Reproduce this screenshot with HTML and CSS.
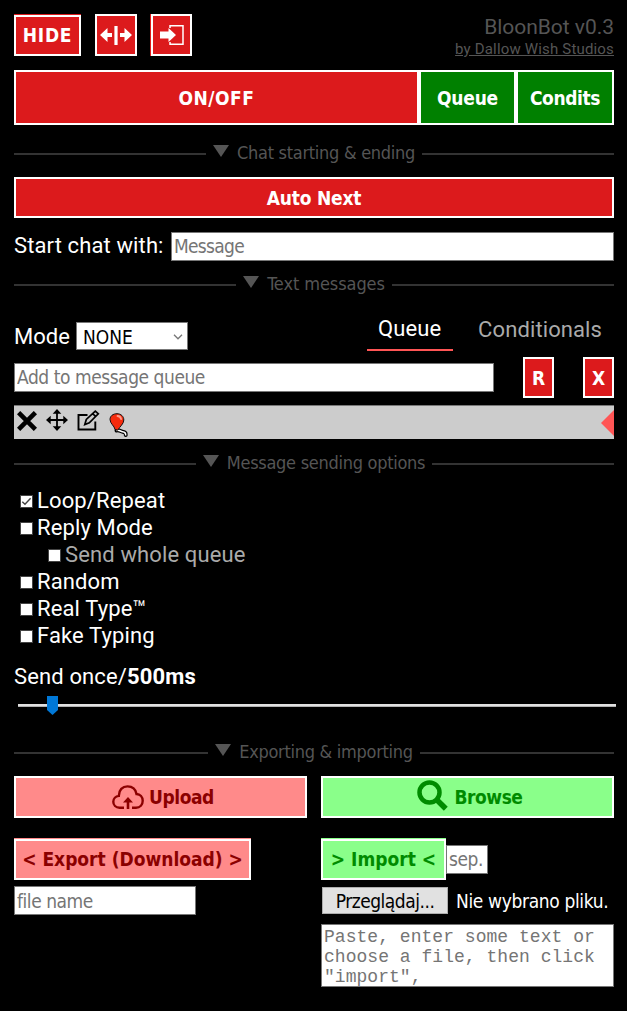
FILE: index.html
```html
<!DOCTYPE html>
<html lang="en">
<head>
<meta charset="utf-8">
<title>BloonBot</title>
<link rel="stylesheet" href="styles.css">
</head>
<body>
<main class="panel">
  <header class="top">
    <button class="btn hide"><span>HIDE</span></button>
    <button class="btn icon-btn"><svg width="32" height="20" viewBox="0 0 32 20"><path fill="#fff" d="M0 10L7.500 3v5H12v4H7.500v5zM32 10L24.500 3v5H20v4h4.500v5zM14.400 1h3.200v19h-3.200z"/></svg></button>
    <button class="btn icon-btn dock"><svg width="24" height="20" viewBox="0 0 24 20"><path fill="none" stroke="#fff" stroke-width="1.500" d="M10 3V.8h13v18.400H10V17"/><path fill="#fff" d="M0 6.500h8.500V3l7.500 7-7.500 7v-3.500H0z"/></svg></button>
    <div class="brand"><div class="name">BloonBot v0.3</div><a class="by">by Dallow Wish Studios</a></div>
  </header>
  <div class="main-row">
    <button class="btn onoff"><span>ON/OFF</span></button>
    <button class="btn green queue"><span>Queue</span></button>
    <button class="btn green condits"><span>Condits</span></button>
  </div>
  <div class="section s1"><i class="tri"></i><span>Chat starting &amp; ending</span></div>
  <button class="btn auto"><span>Auto Next</span></button>
  <div class="start"><label>Start chat with:</label><input class="field message" placeholder="Message"></div>
  <div class="section s2"><i class="tri"></i><span>Text messages</span></div>
  <div class="mode-row">
    <label class="mode">Mode</label>
    <div class="select"><span>NONE</span><svg width="10" height="6" viewBox="0 0 10 6"><path fill="none" stroke="#777" stroke-width="1.300" d="M1 .8l4 4 4-4"/></svg></div>
    <div class="tabs"><div class="tab active"><span class="tq">Queue</span></div><div class="tab"><span class="tc">Conditionals</span></div></div>
  </div>
  <div class="add-row">
    <input class="field add" placeholder="Add to message queue">
    <button class="btn small"><span>R</span></button>
    <button class="btn small"><span>X</span></button>
  </div>
  <div class="item">
    <svg class="ic-x" width="20" height="20" viewBox="0 0 20 20"><path stroke="#000" stroke-width="4.600" d="M1.600 1.600l16.800 16.800M18.400 1.600L1.600 18.400"/></svg>
    <svg class="ic-move" width="22" height="22" viewBox="0 0 22 22"><path stroke="#000" stroke-width="1.800" d="M11 2v18M2 11h18"/><path d="M11 0l4.300 4.700H6.700zM11 22l4.300-4.700H6.700zM0 11l4.700-4.300v8.600zM22 11l-4.700-4.300v8.600z"/></svg>
    <svg class="ic-edit" width="23" height="22" viewBox="0 0 23 22"><path fill="none" stroke="#000" stroke-width="1.900" d="M10.500 5H1.500v14.500h16.800v-8"/><path fill="none" stroke="#000" stroke-width="1.700" d="M7.800 14.500l1.500-5L18.300 1.200l3 2.600-9 9zM15.600 3.600l3 2.800"/></svg>
    <svg class="ic-balloon" width="20" height="25" viewBox="0 0 20 25"><path fill="none" stroke="#000" stroke-width="4" stroke-linecap="round" d="M7.500 17.500c3-.8 4 1 6 1.200s3.500.8 3.200 3.300"/><path fill="none" stroke="#fff" stroke-width="1.500" d="M7.500 17.500c3-.8 4 1 6 1.200s3.500.8 3.200 3.800"/><path fill="#f52b0d" stroke="#111" stroke-width="1" d="M8 .7c4 0 6.800 2.700 6.800 6.300 0 4-4 6.400-6 10.200l-2.800-.8C5.500 13 1 10.500 1 6.500 1 3 4 .7 8 .7z"/><path fill="none" stroke="#ff9b89" stroke-width="1.800" stroke-linecap="round" d="M8.500 3c2 .1 3.300 1.400 3.600 3.200"/></svg>
    <i class="marker"></i>
  </div>
  <div class="section s3"><i class="tri"></i><span>Message sending options</span></div>
  <div class="options">
    <label class="opt"><i class="box"><svg width="11" height="11" viewBox="0 0 11 11"><path fill="none" stroke="#444" stroke-width="1.400" d="M1.300 5.700L4 8.300l5.600-6"/></svg></i><span>Loop/Repeat</span></label>
    <label class="opt"><i class="box"></i><span>Reply Mode</span></label>
    <label class="opt sub"><i class="box"></i><span>Send whole queue</span></label>
    <label class="opt"><i class="box"></i><span>Random</span></label>
    <label class="opt"><i class="box"></i><span>Real Type™</span></label>
    <label class="opt"><i class="box"></i><span>Fake Typing</span></label>
  </div>
  <div class="rate">Send once/<b>500ms</b></div>
  <div class="slider"><svg class="thumb" width="11" height="19" viewBox="0 0 11 19"><path fill="#0078d7" d="M0 0h11v14l-5.500 5L0 14z"/></svg></div>
  <div class="section s4"><i class="tri"></i><span>Exporting &amp; importing</span></div>
  <div class="io">
    <div class="col">
      <button class="btn pink wide"><svg width="32" height="25" viewBox="0 0 32 25"><path fill="none" stroke="#8b0000" stroke-width="2.400" d="M12 22.700H7.500C3.800 22.700 1.300 20 1.300 16.800c0-3.300 2.400-5.600 5.500-5.900C6.800 5 10.500 1.400 15.500 1.400c4.800 0 8.200 3 9 7.600 3.700.2 6.200 3.200 6.200 6.700 0 4-2.700 7-6.700 7h-4"/><path fill="#8b0000" d="M16 12l5 5.500h-3.700V24h-2.600v-6.500H11z"/></svg><span class="up">Upload</span></button>
      <button class="btn pink export"><span>&lt; Export (Download) &gt;</span></button>
      <input class="field file-name" placeholder="file name">
    </div>
    <div class="col">
      <button class="btn lime wide"><svg class="lens" width="31" height="31" viewBox="0 0 31 31"><circle cx="12.500" cy="12.500" r="10" fill="none" stroke="#008b00" stroke-width="4.500"/><path stroke="#008b00" stroke-width="5.500" d="M18.500 18.500l10.300 10.300"/></svg><span class="br">Browse</span></button>
      <div class="import-row"><button class="btn lime import"><span>&gt; Import &lt;</span></button><input class="field sep" placeholder="sep."></div>
      <div class="file-row"><button class="native"><span>Przeglądaj...</span></button><span class="none">Nie wybrano pliku.</span></div>
      <div class="area">Paste, enter some text or choose a file, then click "import",</div>
    </div>
  </div>
</main>
</body>
</html>
```
FILE: styles.css
```css
* { box-sizing: border-box; }
body { margin: 0; background: #000; color: #fff; font-family: Roboto, sans-serif; font-size: 22px; }
svg { display: block; flex: none; }
.panel { width: 627px; height: 1011px; padding: 14px 13px 0 14px; display: flex; flex-direction: column; overflow: hidden; }
.btn, .field, .section, .select, .native, .none { font-family: "DejaVu Sans Condensed", "DejaVu Sans", sans-serif; font-stretch: condensed; font-size: 19px; }
.btn { display: flex; align-items: center; justify-content: center; margin: 0; padding: 0; border: 2px solid #fff; border-radius: 0; background: #dc1a1c; color: #fff; font-weight: bold; white-space: nowrap; flex: none; }
.btn.green { background: #008000; }
.btn.pink { background: #ff8a8a; color: #8b0000; }
.btn.lime { background: #8aff8a; color: #008b00; }
.top { display: flex; height: 42px; }
.top .hide { width: 67px; height: 41px; margin-top: 1px; box-shadow: 0 -1px #dc1a1c; letter-spacing: .7px; padding: 0 0 1px 0; }
.icon-btn { width: 42px; margin-left: 14px; }
.top .dock { width: 41px; margin-left: 14px; box-shadow: -1px 0 #dc1a1c; }
.brand { margin-left: auto; text-align: right; color: #555; }
.name { font-size: 21px; line-height: 26px; letter-spacing: -.03px; }
.by { display: block; font-size: 15px; line-height: 18px; letter-spacing: .17px; text-decoration: underline; }
.main-row { display: flex; height: 55px; margin-top: 14px; }
.onoff { width: 405px; letter-spacing: .5px; }
.queue { width: 97px; letter-spacing: -.2px; }
.condits { width: 98px; letter-spacing: -.4px; }
.section { display: flex; align-items: center; height: 24px; color: #555; font-size: 18px; letter-spacing: -.28px; white-space: nowrap; }
.section::before, .section::after { content: ""; flex: 1; height: 2px; background: #333; }
.section span { margin: -4px 7px 0 8px; }
.tri { margin: -6px 0 0 7px; border-left: 8px solid transparent; border-right: 8px solid transparent; border-top: 12px solid #555; }
.s1 { margin-top: 17px; }
.auto { height: 41px; margin-top: 11px; letter-spacing: -.2px; }
.start { display: flex; align-items: center; justify-content: space-between; height: 29px; margin-top: 14px; }
.start label { margin-top: -2px; letter-spacing: .12px; }
.field { height: 29px; padding: 0 2px 2px; border: 1px solid #777; border-radius: 0; background: #fff; color: #000; outline: 0; letter-spacing: -.45px; }
.field::placeholder { color: #757575; opacity: 1; }
.message { width: 443px; letter-spacing: -.7px; }
.s2 { margin-top: 12px; letter-spacing: -.08px; }
.mode-row { display: flex; height: 37px; margin-top: 17px; }
.mode { width: 62px; line-height: 46px; }
.select { display: flex; align-items: center; justify-content: space-between; width: 112px; height: 28px; margin-top: 8px; padding: 2px 4px 0 6px; border: 1px solid #777; background: #fff; color: #000; }
.tabs { display: flex; margin-left: auto; letter-spacing: .1px; }
.tab { height: 37px; line-height: 31px; padding: 0 12px 0 11px; color: #aaa; }
.tab.active { width: 86px; margin-right: 14px; line-height: 30px; color: #fff; border-bottom: 2px solid #ff5555; }
.add-row { display: flex; height: 41px; margin-top: 6px; }
.add { width: 480px; margin-top: 6px; }
.small { width: 31px; margin-left: 29px; }
.item { display: flex; height: 34px; margin-top: 7px; border-top: 1px solid #777; background: #ccc; }
.ic-x { margin: 5px 0 0 3px; }
.ic-move { margin: 3px 0 0 9px; }
.ic-edit { margin: 4px 0 0 9px; }
.ic-balloon { margin: 7px 0 0 9px; }
.marker { margin: 4px 0 0 auto; border-top: 13px solid transparent; border-bottom: 13px solid transparent; border-right: 13px solid #ff5555; height: 26px; }
.s3 { margin-top: 13px; }
.options { margin-top: 11px; padding-left: 6px; letter-spacing: .13px; }
.opt { display: flex; align-items: center; height: 27px; }
.box { width: 13px; height: 13px; margin: 1px 4px 0 0; border: 1px solid #444; background: #fff; }
.opt.sub { padding-left: 28px; color: #aaa; }
.rate { height: 28px; line-height: 28px; margin-top: 14px; letter-spacing: .13px; }
.slider { height: 3px; width: 598px; margin: 13px 0 0 4px; background: #e0e0e0; border-bottom: 1px solid #b0b0b0; position: relative; flex: none; }
.thumb { position: absolute; left: 29px; top: -8px; }
.s4 { margin-top: 34px; }
.io { display: flex; gap: 14px; margin-top: 11px; }
.col { width: 293px; display: flex; flex-direction: column; align-items: flex-start; }
.wide { width: 293px; height: 42px; gap: 5px; padding-left: 5px; letter-spacing: -.45px; }
.lens { margin: -3px 1px 0 0; }
.btn.export, .btn.import { height: 41px; padding-bottom: 1px; }
.btn.export { width: 237px; margin-top: 21px; box-shadow: 0 -1px #ff8a8a; }
.file-name { width: 182px; margin-top: 6px; padding-bottom: 0; }
.import-row { display: flex; margin-top: 20px; }
.btn.import { width: 125px; margin-top: 1px; box-shadow: 0 -1px #8aff8a; }
.sep { width: 42px; margin-top: 7px; }
.file-row { display: flex; align-items: center; height: 27px; margin: 7px 0 0 1px; }
.native { width: 126px; height: 27px; padding: 0; border: 1px solid #adadad; background: #e1e1e1; color: #000; letter-spacing: -.48px; }
.none { margin-left: 8px; white-space: nowrap; letter-spacing: -.35px; }
.area { width: 293px; height: 63px; margin-top: 10px; padding: 2px; border: 1px solid #777; background: #fff; color: #757575; font: 18px/20px "Liberation Mono", monospace; letter-spacing: .03px; overflow: hidden; }
```
